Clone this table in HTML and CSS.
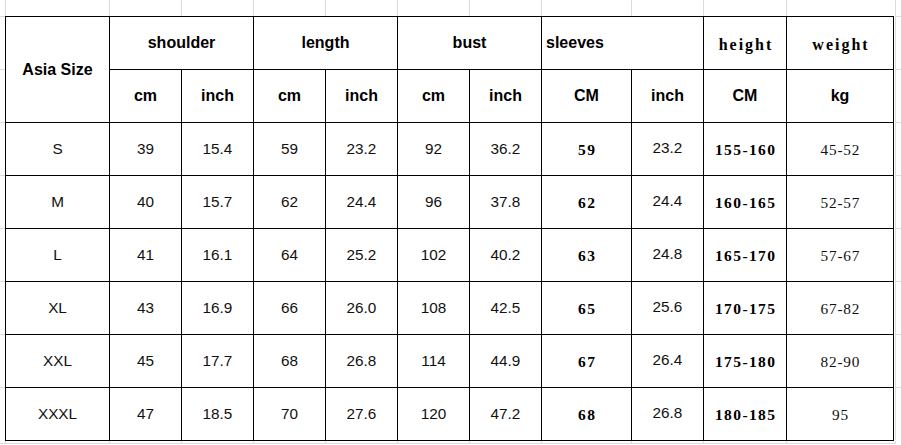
FILE: index.html
```html
<!DOCTYPE html>
<html>
<head>
<meta charset="utf-8">
<link rel="stylesheet" href="styles.css">
</head>
<body>
<div class="sheet">
  <div class="strip strip-top">
    <span class="gc w5"></span><span class="gc w104"></span><span class="gc w72"></span><span class="gc w72"></span><span class="gc w72"></span><span class="gc w72"></span><span class="gc w72"></span><span class="gc w72"></span><span class="gc w90"></span><span class="gc w72"></span><span class="gc w83"></span><span class="gc w109"></span>
  </div>
  <div class="middle">
    <div class="side side-left">
      <span class="gr h53"></span><span class="gr h53"></span><span class="gr h53"></span><span class="gr h53"></span><span class="gr h53"></span><span class="gr h53"></span><span class="gr h53"></span><span class="gr h53 last"></span>
    </div>
    <table class="chart">
      <colgroup>
        <col class="c-size"><col class="c72"><col class="c72"><col class="c72"><col class="c72"><col class="c72"><col class="c72"><col class="c90"><col class="c72"><col class="c83"><col class="c107">
      </colgroup>
      <thead>
        <tr>
          <th rowspan="2" class="hd">Asia Size</th>
          <th colspan="2" class="hd">shoulder</th>
          <th colspan="2" class="hd">length</th>
          <th colspan="2" class="hd">bust</th>
          <th colspan="2" class="hd left">sleeves</th>
          <th class="hd serif">height</th>
          <th class="hd serif">weight</th>
        </tr>
        <tr>
          <th class="hd">cm</th><th class="hd">inch</th>
          <th class="hd">cm</th><th class="hd">inch</th>
          <th class="hd">cm</th><th class="hd">inch</th>
          <th class="hd">CM</th><th class="hd">inch</th>
          <th class="hd">CM</th><th class="hd">kg</th>
        </tr>
      </thead>
      <tbody>
        <tr><td>S</td><td>39</td><td>15.4</td><td>59</td><td>23.2</td><td>92</td><td>36.2</td><td class="sb">59</td><td class="up">23.2</td><td class="sb">155-160</td><td class="sr">45-52</td></tr>
        <tr><td>M</td><td>40</td><td>15.7</td><td>62</td><td>24.4</td><td>96</td><td>37.8</td><td class="sb">62</td><td class="up">24.4</td><td class="sb">160-165</td><td class="sr">52-57</td></tr>
        <tr><td>L</td><td>41</td><td>16.1</td><td>64</td><td>25.2</td><td>102</td><td>40.2</td><td class="sb">63</td><td class="up">24.8</td><td class="sb">165-170</td><td class="sr">57-67</td></tr>
        <tr><td>XL</td><td>43</td><td>16.9</td><td>66</td><td>26.0</td><td>108</td><td>42.5</td><td class="sb">65</td><td class="up">25.6</td><td class="sb">170-175</td><td class="sr">67-82</td></tr>
        <tr><td>XXL</td><td>45</td><td>17.7</td><td>68</td><td>26.8</td><td>114</td><td>44.9</td><td class="sb">67</td><td class="up">26.4</td><td class="sb">175-180</td><td class="sr">82-90</td></tr>
        <tr><td>XXXL</td><td>47</td><td>18.5</td><td>70</td><td>27.6</td><td>120</td><td>47.2</td><td class="sb">68</td><td class="up">26.8</td><td class="sb">180-185</td><td class="sr">95</td></tr>
      </tbody>
    </table>
    <div class="side side-right">
      <span class="gr h53"></span><span class="gr h53"></span><span class="gr h53"></span><span class="gr h53"></span><span class="gr h53"></span><span class="gr h53"></span><span class="gr h53"></span><span class="gr h53 last"></span>
    </div>
  </div>
  <div class="strip strip-bottom">
    <span class="gc w5"></span><span class="gc w104"></span><span class="gc w72"></span><span class="gc w72"></span><span class="gc w72"></span><span class="gc w72"></span><span class="gc w72"></span><span class="gc w72"></span><span class="gc w90"></span><span class="gc w72"></span><span class="gc w83"></span><span class="gc w109"></span>
  </div>
</div>
</body>
</html>
```

FILE: styles.css
```css
html, body {
  margin: 0;
  padding: 0;
  background: #ffffff;
}

.sheet {
  width: 901px;
  height: 445px;
  overflow: hidden;
  display: flex;
  flex-direction: column;
  font-family: "Liberation Sans", Arial, sans-serif;
  color: #000;
}

.strip {
  display: flex;
  flex: none;
}

.strip-top {
  height: 16px;
}

.strip-bottom {
  flex: 1;
}

.gc {
  display: block;
  box-sizing: border-box;
  border-right: 1px solid #dcdcdc;
  flex: none;
}

.strip-bottom .gc {
  height: 3px;
  border-bottom: 1px solid #dcdcdc;
}

.w5 { width: 6px; }
.w104 { width: 104px; }
.w72 { width: 72px; }
.w90 { width: 90px; }
.w83 { width: 83px; }
.w109 { width: 109px; }

.middle {
  display: flex;
  flex: none;
}

.side {
  display: flex;
  flex-direction: column;
  flex: none;
}

.side-left { width: 5px; }
.side-right { width: 7px; }

.gr {
  display: block;
  box-sizing: border-box;
  height: 53px;
  border-top: 1px solid #dcdcdc;
}

.side-right .gr {
  border-left: 1px solid #dcdcdc;
  margin-left: 1px;
}

.chart {
  border-collapse: collapse;
  table-layout: fixed;
  width: 889px;
  flex: none;
}

.c-size { width: 104px; }
.c72 { width: 72px; }
.c90 { width: 90px; }
.c83 { width: 83px; }
.c107 { width: 107px; }

.chart th,
.chart td {
  border: 1px solid #000;
  height: 52px;
  padding: 0;
  text-align: center;
  vertical-align: middle;
  box-sizing: border-box;
}

.chart tr {
  height: 53px;
}

.hd {
  font-weight: bold;
  font-size: 16px;
}

.hd.left {
  text-align: left;
  padding-left: 4px;
}

.hd.serif {
  font-family: "Liberation Serif", "Times New Roman", serif;
  letter-spacing: 2px;
  text-indent: 2px;
  padding-top: 3px;
}

.chart td {
  font-size: 15.3px;
  color: #111;
}

.chart td.sb {
  font-family: "Liberation Serif", "Times New Roman", serif;
  font-weight: bold;
  font-size: 15.5px;
  letter-spacing: 1.4px;
  text-indent: 1.4px;
  padding-top: 2px;
  color: #000;
}

.chart td.sr {
  font-family: "Liberation Serif", "Times New Roman", serif;
  letter-spacing: 0.8px;
  text-indent: 0.8px;
  padding-top: 2px;
}

.chart td.up {
  padding-bottom: 3px;
}
```
